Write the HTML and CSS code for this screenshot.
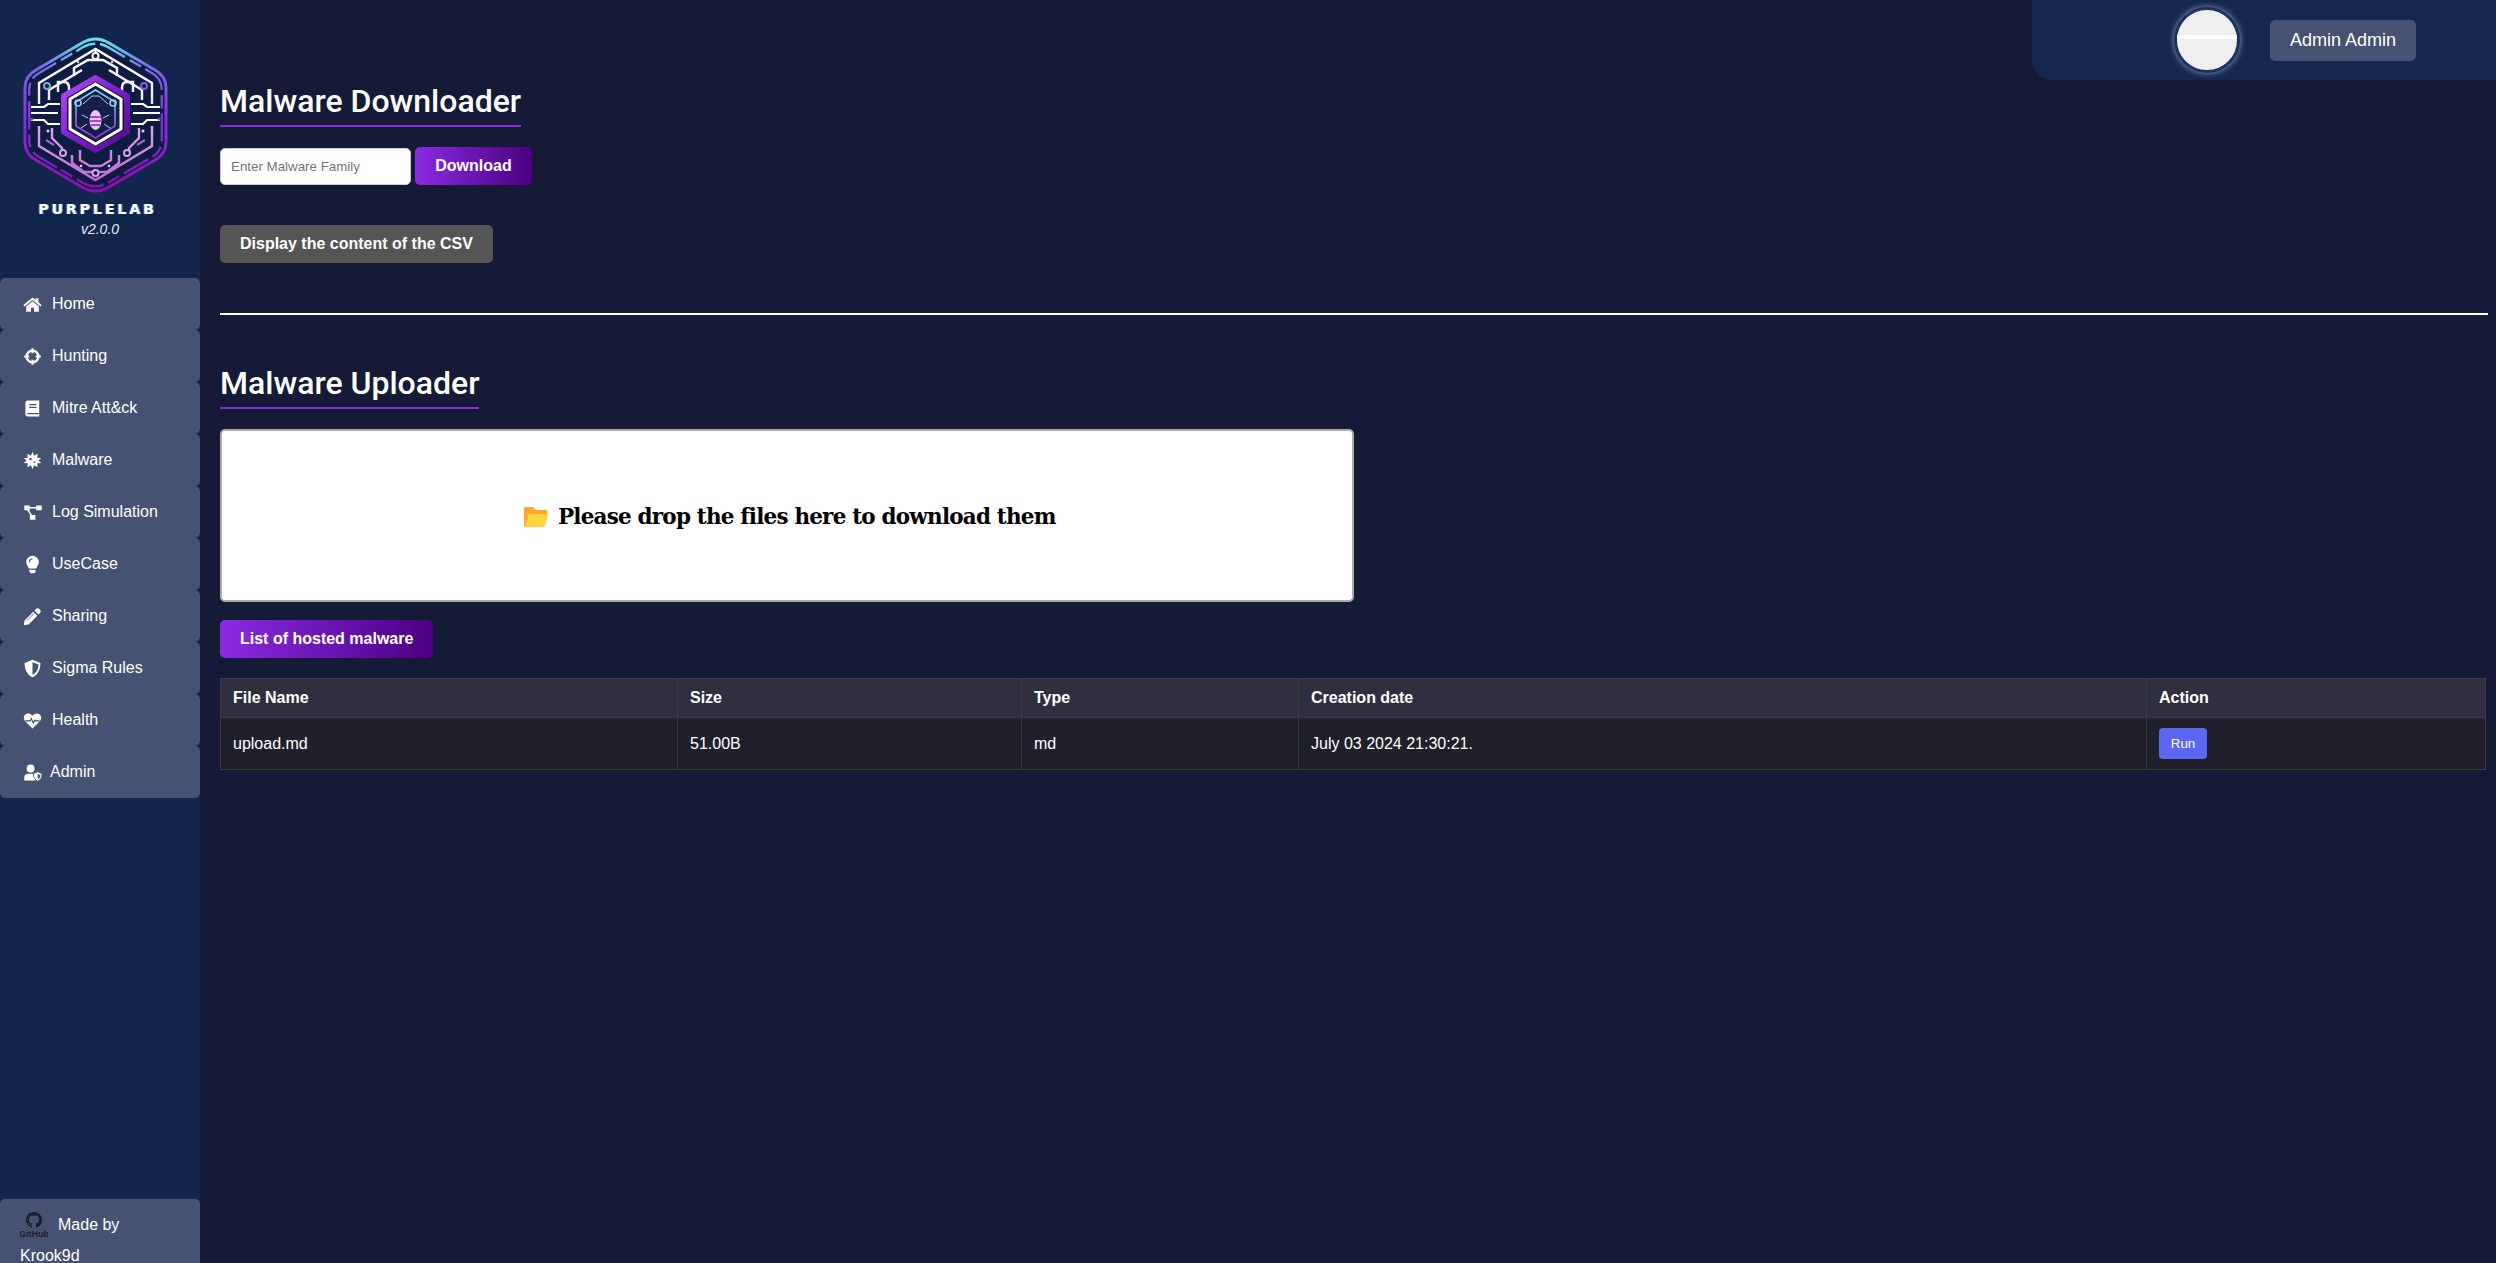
FILE: index.html
```html
<!DOCTYPE html>
<html lang="en">
<head>
    <meta charset="UTF-8">
    <title>PurpleLab</title>
    <link rel="stylesheet" href="styles.css">
</head>
<body>
    <aside class="sidebar">
        <div class="brand">
            <svg class="logo" viewBox="0 30 200 170" width="200" height="170">
                <defs>
                    <linearGradient id="rim" x1="0" y1="0" x2="0" y2="1">
                        <stop offset="0" stop-color="#5fe6ea"/>
                        <stop offset=".18" stop-color="#7a6be6"/>
                        <stop offset=".55" stop-color="#7d2fd0"/>
                        <stop offset="1" stop-color="#8a0fb0"/>
                    </linearGradient>
                    <linearGradient id="trace" gradientUnits="userSpaceOnUse" x1="0" y1="45" x2="0" y2="185">
                        <stop offset="0" stop-color="#ffffff"/>
                        <stop offset=".5" stop-color="#f0e4f8"/>
                        <stop offset=".6" stop-color="#dca4ea"/>
                        <stop offset="1" stop-color="#c060d8"/>
                    </linearGradient>
                    <linearGradient id="core" x1="0" y1="0" x2="1" y2="1">
                        <stop offset="0" stop-color="#b04cf0"/>
                        <stop offset=".5" stop-color="#7a1fc8"/>
                        <stop offset="1" stop-color="#4a0f80"/>
                    </linearGradient>
                    <linearGradient id="inner" x1="0" y1="0" x2="0" y2="1">
                        <stop offset="0" stop-color="#6fe0ea"/>
                        <stop offset="1" stop-color="#9a2fd8"/>
                    </linearGradient>
                    <path id="hexOuter" d="M82 43Q95.5 35 109 43L155 70Q166 76 166 88V142Q166 154 155 160L109 187Q95.5 195 82 187L36 160Q25 154 25 142V88Q25 76 36 70Z"/>
                </defs>
                <use href="#hexOuter" fill="#0f1c42" stroke="url(#rim)" stroke-width="3"/>
                <use href="#hexOuter" fill="none" stroke="url(#rim)" stroke-width="2.5" stroke-dasharray="14 5 30 6" transform="translate(95.5 115) scale(.94) translate(-95.5 -115)"/>
                <g fill="none" stroke="url(#trace)" stroke-width="2.4">
                    <path d="M39 104V83L95.5 49 152 83V104M39 126V146L95.5 180 152 146V126"/>
                    <path d="M74 76V68L88 60H103L117 68V76M58 92V82H64Q69 82 69 88V92M133 92V82H127Q122 82 122 88V92M95.5 49V58"/>
                    <path d="M49 100V90L82 70M142 100V90L109 70"/>
                    <path d="M52 128V138L62 148V155M139 128V138L129 148V155M72 155V163L84 172H107L119 163V155M80 150V160L90 166H101L111 160V150"/>
                </g>
                <g stroke-width="2.2" fill="none">
                    <path d="M31 107H44L48 104H60M31 113H58M31 120H44L48 124H60" stroke="#ffffff"/>
                    <path d="M160 107H147L143 104H131M160 113H133M160 120H147L143 124H131" stroke="#ffffff"/>
                    <path d="M46 140L54 145M145 140L137 145" stroke="#b257d8"/>
                </g>
                <g fill="#0f1c42" stroke-width="2">
                    <circle cx="95.5" cy="56" r="3" stroke="#f4f0ff"/>
                    <circle cx="47" cy="86" r="3" stroke="#78a6d8"/>
                    <circle cx="144" cy="86" r="3" stroke="#7a5fd8"/>
                    <circle cx="63" cy="153" r="3" stroke="#dba0ea"/>
                    <circle cx="127" cy="153" r="3" stroke="#dba0ea"/>
                    <circle cx="95.5" cy="173" r="3" stroke="#dba0ea"/>
                </g>
                <g fill="#e8c8f4">
                    <circle cx="48" cy="131" r="1.5"/><circle cx="143" cy="131" r="1.5"/>
                    <circle cx="81" cy="166" r="1.3"/><circle cx="109" cy="166" r="1.3"/>
                    <circle cx="78" cy="62" r="1.2"/><circle cx="112" cy="62" r="1.2"/>
                    <circle cx="32" cy="119" r="1.5" fill="#9a2fd8"/><circle cx="159" cy="119" r="1.5" fill="#9a2fd8"/>
                </g>
                <polygon points="95.5,78 127,96 127,132 95.5,150 64,132 64,96" fill="#1a1240" stroke="url(#core)" stroke-width="6" stroke-linejoin="round"/>
                <polygon points="95.5,84 121,99 121,129 95.5,144 70,129 70,99" fill="#14204a" stroke="#ffffff" stroke-width="3"/>
                <polygon points="95.5,90 115,102 115,126 95.5,138 76,126 76,102" fill="none" stroke="url(#inner)" stroke-width="1.6"/>
                <g fill="none" stroke="#d4c8ec" stroke-width="1">
                    <path d="M83 104L92 96H99L108 104M88 118L82 115M103 118L109 115M87 124L81 128M104 124L110 128"/>
                </g>
                <circle cx="78" cy="103" r="3" fill="none" stroke="#88d4e8" stroke-width="1.6"/>
                <circle cx="113" cy="103" r="3" fill="none" stroke="#88d4e8" stroke-width="1.6"/>
                <ellipse cx="95.5" cy="120" rx="6" ry="10" fill="#e8c8f0"/>
                <path d="M90 117H101M90 121H101M91 125H100" stroke="#8a1fc8" stroke-width="1.4"/>
            </svg>
            <div class="brand-name">PURPLELAB</div>
            <div class="brand-version">v2.0.0</div>
        </div>

        <nav class="menu">
            <a class="menu-item" href="#">
                <svg class="menu-icon" viewBox="0 0 24 24"><path d="M12 3L0.5 12.6 2 14.4 12 6.2 22 14.4 23.5 12.6 19.5 9.3V4H16V6.4Z"/><path d="M12 8L4 14.6V21H10V16H14V21H20V14.6Z"/></svg>
                Home
            </a>
            <a class="menu-item" href="#">
                <svg class="menu-icon" viewBox="0 0 24 24"><circle cx="12" cy="12" r="7.5" fill="none" stroke="#fff" stroke-width="3"/><path d="M12 1.5V8M12 16V22.5M1.5 12H8M16 12H22.5" stroke="#fff" stroke-width="2.6"/></svg>
                Hunting
            </a>
            <a class="menu-item" href="#">
                <svg class="menu-icon" viewBox="0 0 24 24"><path d="M6 2H20.5V22H6A3 3 0 0 1 3 19V5A3 3 0 0 1 6 2Z"/><path d="M8 7H17M8 10.5H17M5.5 18.5H20" stroke="#455272" stroke-width="1.6"/></svg>
                Mitre Att&amp;ck
            </a>
            <a class="menu-item" href="#">
                <svg class="menu-icon" viewBox="0 0 24 24"><path d="M12 1L14 6 18.5 3.5 18 8.5 23 9 19.5 12 23 15 18 15.5 18.5 20.5 14 18 12 23 10 18 5.5 20.5 6 15.5 1 15 4.5 12 1 9 6 8.5 5.5 3.5 10 6Z"/><circle cx="9.5" cy="10" r="1.6" fill="#455272"/><circle cx="14.5" cy="14" r="1.2" fill="#455272"/></svg>
                Malware
            </a>
            <a class="menu-item" href="#">
                <svg class="menu-icon wide" viewBox="0 0 24 24"><path d="M1 3H8V9H1ZM16 3H23V9H16ZM8 15H15V21H8Z"/><path d="M6 6H18M5 8L11 17" stroke="#fff" stroke-width="1.8" fill="none"/></svg>
                Log Simulation
            </a>
            <a class="menu-item" href="#">
                <svg class="menu-icon" viewBox="0 0 24 24"><path d="M12 1A8 8 0 0 0 4 9C4 12 6 13.5 7.5 17H16.5C18 13.5 20 12 20 9A8 8 0 0 0 12 1Z"/><path d="M8 18.5H16V20.5L14.5 23H9.5L8 20.5Z"/><path d="M8 9A4 4 0 0 1 12 5" stroke="#455272" stroke-width="1.4" fill="none"/></svg>
                UseCase
            </a>
            <a class="menu-item" href="#">
                <svg class="menu-icon" viewBox="0 0 24 24"><path d="M17 2Q18.5 1 20 2L22 4Q23 5.5 22 7L19.5 9.5 14.5 4.5ZM13 6L18 11 7 22 1 23 2 17Z"/><path d="M5 17L14 8" stroke="#455272" stroke-width="1"/></svg>
                Sharing
            </a>
            <a class="menu-item" href="#">
                <svg class="menu-icon" viewBox="0 0 24 24"><path d="M12 1L22 5C22 13 19 20 12 23 5 20 2 13 2 5Z"/><path d="M12 4V20C17 17.5 19.5 12.5 19.5 6.8Z" fill="#455272"/></svg>
                Sigma Rules
            </a>
            <a class="menu-item" href="#">
                <svg class="menu-icon" viewBox="0 0 24 24"><path d="M12 22L2.5 12.5C-1 8 2 3 6.5 3 9 3 11 4.5 12 6 13 4.5 15 3 17.5 3 22 3 25 8 21.5 12.5Z"/><path d="M3 12.5H9L10.5 9.5 13 15 15 11.5 16 12.5H21" stroke="#455272" stroke-width="1.5" fill="none"/></svg>
                Health
            </a>
            <a class="menu-item admin" href="#">
                <svg class="menu-icon wide" viewBox="0 0 24 24"><circle cx="9" cy="7" r="5"/><path d="M1 22V18Q1 13.5 6 13.5H12Q14 13.5 15 14.5V22Z"/><path d="M18 11L23.5 13.5C23.5 18 22 21 18 23 14 21 12.5 18 12.5 13.5Z" stroke="#455272"/><path d="M18 14V20.5C20.5 19.5 21.5 17 21.5 15Z" fill="#455272"/></svg>
                Admin
            </a>
        </nav>

        <div class="made-by">
            <svg class="github" viewBox="0 0 28 26" width="28" height="26">
                <path transform="translate(6 0)" fill="#1b1f23" d="M8 0C3.58 0 0 3.58 0 8c0 3.54 2.29 6.53 5.47 7.59.4.07.55-.17.55-.38 0-.19-.01-.82-.01-1.49-2.01.37-2.53-.49-2.69-.94-.09-.23-.48-.94-.82-1.13-.28-.15-.68-.52-.01-.53.63-.01 1.08.58 1.23.82.72 1.21 1.87.87 2.33.66.07-.52.28-.87.51-1.07-1.78-.2-3.64-.89-3.64-3.95 0-.87.31-1.59.82-2.15-.08-.2-.36-1.02.08-2.12 0 0 .67-.21 2.2.82.64-.18 1.32-.27 2-.27.68 0 1.36.09 2 .27 1.53-1.04 2.2-.82 2.2-.82.44 1.1.16 1.92.08 2.12.51.56.82 1.27.82 2.15 0 3.07-1.87 3.75-3.65 3.95.29.25.54.73.54 1.48 0 1.07-.01 1.93-.01 2.2 0 .21.15.46.55.38A8.013 8.013 0 0016 8c0-4.42-3.58-8-8-8z"/>
                <text x="14" y="25" class="github-word">GitHub</text>
            </svg>
            Made by<br>Krook9d
        </div>
    </aside>

    <main class="content">
        <section class="section">
            <h2 class="section-title first">Malware Downloader</h2>
            <form class="search-row">
                <input class="family-input" type="text" placeholder="Enter Malware Family">
                <button class="btn btn-purple btn-download" type="button">Download</button>
            </form>
            <button class="btn btn-grey" type="button">Display the content of the CSV</button>
        </section>

        <hr class="divider">

        <section class="section">
            <h2 class="section-title">Malware Uploader</h2>
            <div class="dropzone">
                <svg class="folder" viewBox="0 0 24 20" width="24" height="20"><path d="M1 0H9L12 3H22A1.5 1.5 0 0 1 23.5 4.5V8H0V1Z" fill="#ffa726"/><path d="M0 1H4V20H1A1 1 0 0 1 0 19Z" fill="#ffa726"/><path d="M5 7H23A1 1 0 0 1 24 8.3L21 19A1.5 1.5 0 0 1 19.5 20H1Z" fill="#ffd740"/></svg>
                <span>Please drop the files here to download them</span>
            </div>
            <button class="btn btn-purple btn-list" type="button">List of hosted malware</button>

            <table class="files">
                <colgroup>
                    <col class="col-name"><col class="col-size"><col class="col-type"><col class="col-date"><col>
                </colgroup>
                <thead>
                    <tr><th>File Name</th><th>Size</th><th>Type</th><th>Creation date</th><th>Action</th></tr>
                </thead>
                <tbody>
                    <tr>
                        <td>upload.md</td>
                        <td>51.00B</td>
                        <td>md</td>
                        <td>July 03 2024 21:30:21.</td>
                        <td><button class="btn-run" type="button">Run</button></td>
                    </tr>
                </tbody>
            </table>
        </section>
    </main>

    <div class="user-bar">
        <div class="avatar"><span class="avatar-line"></span></div>
        <button class="user-btn" type="button">Admin Admin</button>
    </div>
</body>
</html>
```

FILE: styles.css
```css
* {
    box-sizing: border-box;
}

body {
    margin: 0;
    display: flex;
    height: 1263px;
    overflow: hidden;
    background-color: #151a36;
    color: #fff;
    font-family: "Liberation Sans", Arial, sans-serif;
    font-size: 16px;
}

/* sidebar */
.sidebar {
    width: 200px;
    flex-shrink: 0;
    display: flex;
    flex-direction: column;
    background-color: #12264d;
    overflow: hidden;
}

.brand {
    height: 278px;
    padding-top: 30px;
    text-align: center;
}

.logo {
    display: block;
}

.brand-name {
    margin-top: 1px;
    padding-right: 5px;
    font-family: "DejaVu Sans", sans-serif;
    font-weight: 700;
    font-size: 14px;
    line-height: 16px;
    letter-spacing: 3px;
    text-shadow: 1px 0 0 rgba(90, 230, 240, .7), -1px 0 0 rgba(240, 120, 240, .4);
}

.brand-version {
    margin-top: 4px;
    font-size: 14px;
    font-style: italic;
    color: #e4ecf8;
}

.menu {
    display: flex;
    flex-direction: column;
}

.menu-item {
    display: flex;
    align-items: center;
    gap: 10px;
    height: 52px;
    padding-left: 23px;
    background-color: #455272;
    border-radius: 5px;
    color: #fff;
    text-decoration: none;
}

.menu-item.admin {
    gap: 8px;
}

.menu-icon {
    width: 19px;
    height: 19px;
    flex-shrink: 0;
    fill: #fff;
}

.menu-icon.wide {
    width: 22px;
    margin-left: -1px;
    margin-right: -2px;
}

.made-by {
    margin-top: auto;
    height: 64px;
    padding: 10px 0 0 20px;
    background-color: #455272;
    border-radius: 5px 5px 0 0;
    line-height: 31px;
}

.github {
    float: left;
    margin: 3px 10px 0 0;
}

.github-word {
    font-family: "Liberation Sans", sans-serif;
    font-size: 9px;
    font-weight: 700;
    fill: #1b1f23;
    text-anchor: middle;
}

/* main area */
.content {
    flex: 1;
    min-width: 0;
    padding: 0 8px 0 20px;
}

.section-title {
    display: table;
    margin: 50px 0 20px;
    padding-bottom: 6px;
    border-bottom: 2px solid #8a2be2;
    font-family: Roboto, sans-serif;
    font-size: 32px;
    font-weight: 500;
    line-height: 36px;
}

.section-title.first {
    margin-top: 83px;
}

.search-row {
    display: flex;
    align-items: flex-end;
    gap: 4px;
    margin-bottom: 40px;
}

.family-input {
    width: 191px;
    height: 37px;
    padding: 0 10px;
    border: 1px solid #ccc;
    border-radius: 5px;
    font-family: "Liberation Sans", sans-serif;
    font-size: 13.33px;
}

.btn {
    display: block;
    height: 38px;
    padding: 0 20px;
    border: none;
    border-radius: 5px;
    color: #fff;
    font-family: "Liberation Sans", sans-serif;
    font-size: 16px;
    font-weight: 700;
}

.btn-purple {
    background: linear-gradient(90deg, #8a2be2, #4b0082);
}

.btn-download {
    width: 117px;
}

.btn-grey {
    background-color: #555;
}

.divider {
    height: 2px;
    margin: 50px 0;
    border: none;
    background-color: #fff;
}

.dropzone {
    display: flex;
    align-items: center;
    gap: 10px;
    width: 1134px;
    height: 173px;
    padding: 2px 0 0 302px;
    background-color: #fff;
    border: 2px solid #aaa;
    border-radius: 5px;
    color: #000;
    font-family: "DejaVu Serif", serif;
    font-size: 21.5px;
    font-weight: 700;
    letter-spacing: -.8px;
}

.btn-list {
    margin: 18px 0 20px;
}

.files {
    width: 2266px;
    table-layout: fixed;
    border-collapse: collapse;
    font-size: 16px;
}

.col-name { width: 457px; }
.col-size { width: 344px; }
.col-type { width: 277px; }
.col-date { width: 848px; }

.files th, .files td {
    padding: 0 12px;
    border: 1px solid #3a3a42;
    text-align: left;
}

.files th {
    height: 39px;
    background-color: #2f2f3f;
    font-weight: 700;
}

.files td {
    height: 52px;
    background-color: #20202c;
}

.btn-run {
    display: block;
    width: 48px;
    height: 31px;
    padding: 0;
    border: none;
    border-radius: 4px;
    background-color: #5b67f1;
    color: #fff;
    font-family: "Liberation Sans", sans-serif;
    font-size: 13.33px;
}

/* top right user box, sits over the content */
.user-bar {
    position: absolute;
    top: 0;
    right: 0;
    display: flex;
    align-items: center;
    width: 464px;
    height: 80px;
    padding-left: 142px;
    background-color: #14274f;
    border-bottom-left-radius: 20px;
}

.avatar {
    display: flex;
    align-items: center;
    width: 66px;
    height: 66px;
    border: 3px solid #1c3264;
    border-radius: 50%;
    background-color: #efefef;
    box-shadow: 0 0 6px rgba(255, 255, 255, .55);
}

.avatar-line {
    display: block;
    width: 100%;
    height: 4px;
    margin-top: -6px;
    background-color: #fff;
}

.user-btn {
    width: 146px;
    height: 41px;
    margin-left: 30px;
    border: none;
    border-radius: 5px;
    background-color: #455272;
    color: #fff;
    font-family: "Liberation Sans", sans-serif;
    font-size: 18px;
}
```
